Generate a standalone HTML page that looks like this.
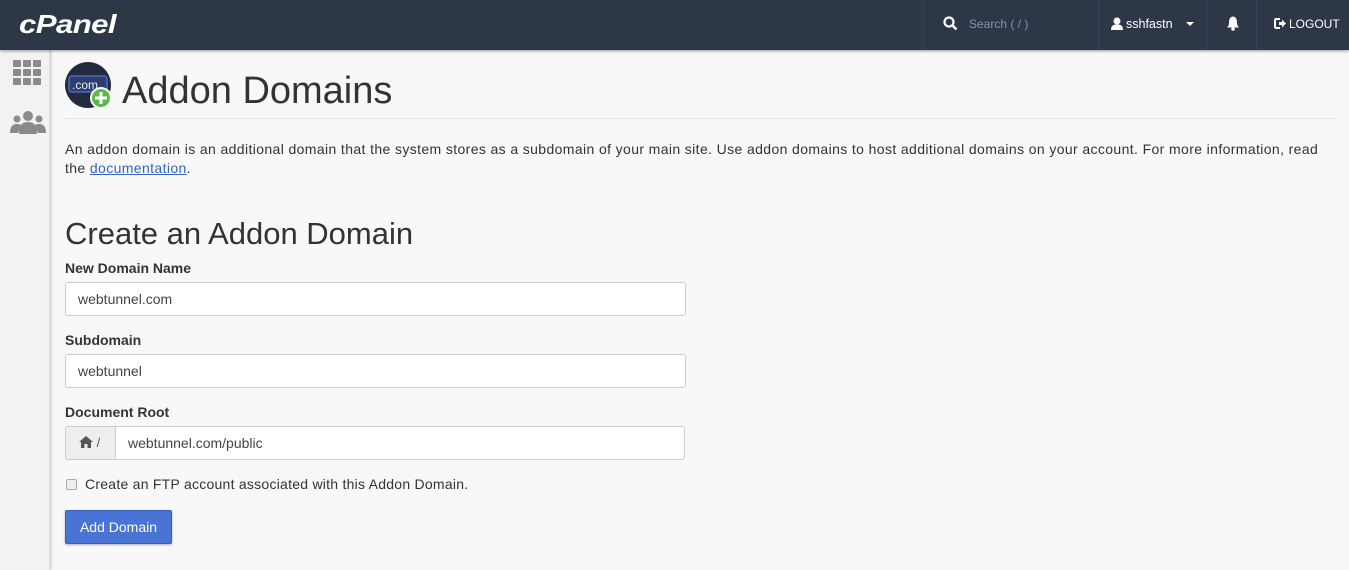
<!DOCTYPE html>
<html><head><style>
*{box-sizing:border-box;margin:0;padding:0}
body{width:1349px;height:570px;overflow:hidden;background:#f8f8f8;font-family:"Liberation Sans",sans-serif;color:#333;position:relative}
.top{position:absolute;left:0;top:0;width:1349px;height:50px;background:#2d3748;box-shadow:0 1px 3px rgba(0,0,0,.4);z-index:2}
.logo{position:absolute;left:19px;top:9px;color:#fff;font-size:26px;font-weight:bold;font-style:italic;letter-spacing:-0.5px;transform:scaleX(1.2);transform-origin:left}
.sep{position:absolute;top:0;height:50px;border-left:1px solid #3a4459}
.top .t{position:absolute;color:#fff;font-size:13px;top:17px}
.side{position:absolute;left:0;top:50px;width:50px;height:520px;background:#f2f2f2;border-right:1px solid #ddd;box-shadow:1px 0 3px rgba(0,0,0,.2)}
.main{position:absolute;left:65px;top:50px;width:1272px}
h1{font-weight:normal;font-size:38px;position:absolute;left:57px;top:20px;color:#333}
.hr{position:absolute;top:68px;left:0;width:1272px;border-top:1px solid #e5e5e5}
p.d{position:absolute;top:90px;left:0;width:1272px;font-size:14px;line-height:19px;color:#333;letter-spacing:0.38px;white-space:nowrap}
a{color:#3165c6}
h2{position:absolute;top:166px;left:0;font-weight:normal;font-size:31px}
label{position:absolute;left:0;font-weight:bold;font-size:14px}
.in{position:absolute;left:0;width:621px;height:34px;border:1px solid #ccc;border-radius:3px;background:#fff;font-size:14px;padding:8px 12px;color:#444}
.btn{position:absolute;left:0;top:460px;width:107px;height:34px;background:#4a74d4;border:1px solid #3a5fb8;border-radius:2px;color:#fff;font-size:14px;text-align:center;line-height:32px;box-shadow:0 1px 2px rgba(0,0,0,.3)}
</style></head><body>
<div class="top">
<div class="logo">cPanel</div>
<div class="sep" style="left:923px"></div><div class="sep" style="left:1098px"></div><div class="sep" style="left:1206px"></div><div class="sep" style="left:1256px"></div>
<svg style="position:absolute;left:943px;top:16px" width="15" height="15" viewBox="0 0 15 15"><circle cx="6" cy="6" r="4.5" stroke="#fff" stroke-width="2.2" fill="none"/><path d="M9.5 9.5L13.5 13.5" stroke="#fff" stroke-width="2.6"/></svg>
<div class="t" style="left:969px;color:#8a93a5;font-size:12px">Search ( / )</div>
<svg style="position:absolute;left:1111px;top:17px" width="12" height="13" viewBox="0 0 12 13"><circle cx="6" cy="4" r="3.5" fill="#fff"/><path d="M0 13C0 8 3 7.5 6 7.5S12 8 12 13Z" fill="#fff"/></svg>
<div class="t" style="left:1126px;font-size:12.5px">sshfastn</div>
<svg style="position:absolute;left:1186px;top:22px" width="8" height="5"><path d="M0 0H8L4 4Z" fill="#fff"/></svg>
<svg style="position:absolute;left:1226px;top:16px" width="14" height="15" viewBox="0 0 14 15"><path d="M7 0.5C3.5 1 3 4 3 7C3 9 2 10.5 1 11.5H13C12 10.5 11 9 11 7C11 4 10.5 1 7 0.5Z" fill="#fff"/><circle cx="7" cy="13" r="1.8" fill="#fff"/></svg>
<svg style="position:absolute;left:1274px;top:18px" width="12" height="11" viewBox="0 0 12 11"><path d="M6 1H2.5Q1 1 1 2.5V8.5Q1 10 2.5 10H6" stroke="#fff" stroke-width="2" fill="none"/><path d="M5 4H8V1.5L12 5.5L8 9.5V7H5Z" fill="#fff"/></svg>
<div class="t" style="left:1289px;font-size:12px">LOGOUT</div>
</div>
<div class="side">
<svg style="position:absolute;left:13px;top:10px" width="29" height="26"><g fill="#8a8a8a"><rect x="0" y="0" width="8" height="7" rx="1"/><rect x="10" y="0" width="8" height="7" rx="1"/><rect x="20" y="0" width="8" height="7" rx="1"/><rect x="0" y="9" width="8" height="7" rx="1"/><rect x="10" y="9" width="8" height="7" rx="1"/><rect x="20" y="9" width="8" height="7" rx="1"/><rect x="0" y="18" width="8" height="7" rx="1"/><rect x="10" y="18" width="8" height="7" rx="1"/><rect x="20" y="18" width="8" height="7" rx="1"/></g></svg>
<svg style="position:absolute;left:10px;top:60px" width="36" height="24"><g fill="#8a8a8a"><circle cx="18" cy="6" r="5"/><circle cx="7" cy="9" r="3.5"/><circle cx="29" cy="9" r="3.5"/><path d="M9 24C9 15 12 12 18 12S27 15 27 24Z"/><path d="M0 23C0 16 3 14 7 14S11 15 11 17L8 23Z"/><path d="M36 23C36 16 33 14 29 14S25 15 25 17L28 23Z"/></g></svg>
</div>
<div class="main">
<svg style="position:absolute;left:0;top:12px" width="48" height="48" viewBox="0 0 48 48"><circle cx="23" cy="23" r="23" fill="#232a3b"/><rect x="4" y="14" width="38" height="16" rx="3" fill="#2f3e6e" stroke="#4a6bc0" stroke-width="1.5"/><text x="7" y="27" font-family="Liberation Sans" font-size="12" fill="#e8eaf2">.com</text><circle cx="36" cy="36" r="11" fill="#fff"/><circle cx="36" cy="36" r="9" fill="#5bb84c"/><path d="M36 30V42M30 36H42" stroke="#fff" stroke-width="3"/></svg>
<h1>Addon Domains</h1>
<div class="hr"></div>
<p class="d">An addon domain is an additional domain that the system stores as a subdomain of your main site. Use addon domains to host additional domains on your account. For more information, read<br>the <a href="#">documentation</a>.</p>
<h2>Create an Addon Domain</h2>
<label style="top:210px">New Domain Name</label>
<div class="in" style="top:232px">webtunnel.com</div>
<label style="top:282px">Subdomain</label>
<div class="in" style="top:304px">webtunnel</div>
<label style="top:354px">Document Root</label>
<div class="in" style="top:376px;padding-left:62px;width:620px">webtunnel.com/public</div>
<div style="position:absolute;left:0;top:376px;width:51px;height:34px;background:#eee;border:1px solid #ccc;border-radius:3px 0 0 3px;font-size:13px;padding:8px 0 0 13px;color:#555">
<svg width="14" height="12" viewBox="0 0 14 12" style="vertical-align:-1px"><path d="M7 0L0 6H2V12H5.5V8H8.5V12H12V6H14Z" fill="#555"/></svg> /</div>
<div style="position:absolute;left:1px;top:429px;width:11px;height:11px;border:1px solid #aaa;border-radius:2px;background:#eee"></div>
<div style="position:absolute;left:20px;top:426px;font-size:14px;letter-spacing:0.25px">Create an FTP account associated with this Addon Domain.</div>
<div class="btn">Add Domain</div>
</div>
</body></html>
